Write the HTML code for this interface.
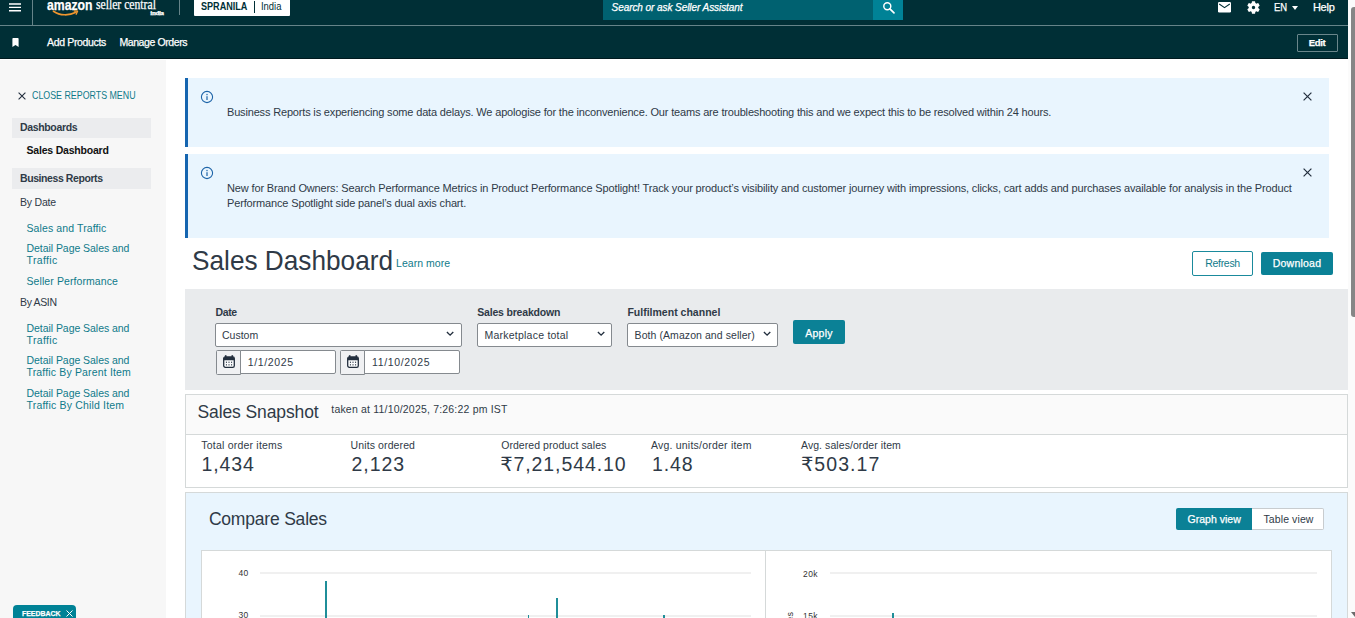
<!DOCTYPE html>
<html lang="en">
<head>
<meta charset="utf-8">
<title>Sales Dashboard</title>
<style>
*{box-sizing:border-box;margin:0;padding:0}
html,body{width:1355px;height:618px;overflow:hidden;background:#fff}
body{font-family:"Liberation Sans","DejaVu Sans",sans-serif;font-size:12px;color:#0f1111;position:relative}
.abs{position:absolute}
.t{position:absolute;white-space:nowrap;line-height:1;transform-origin:0 50%}
#wrap{position:absolute;left:0;top:0;width:1348px;height:618px;overflow:hidden;background:#fff}
/* header */
#hdr{position:absolute;left:0;top:0;width:1348px;height:59px;background:#002f36;border-bottom:1px solid #001a1f}
#hdr .line{position:absolute;left:0;top:25px;width:1348px;height:1px;background:#668489}
.w{color:#fff;-webkit-text-stroke:0.25px #fff}
/* sidebar */
#side{position:absolute;left:0;top:60px;width:165.5px;height:558px;background:#f7f7f7}
.sec{position:absolute;left:12.3px;width:138.5px;height:20px;background:#ebecee}
.lnk{color:#0f7a8a}
/* alerts */
.alert{position:absolute;left:185px;width:1144px;background:#e9f5fe;border-left:3px solid #1565b0}
/* form */
.sel{position:absolute;height:23.5px;background:#fff;border:1px solid #858a8f;border-radius:2px}
.btn{position:absolute;border-radius:2px;background:#0b8196;color:#fff;text-align:center}
</style>
</head>
<body>
<div id="wrap">

<!-- HEADER -->
<div id="hdr">
  <div class="line"></div>
  <!-- hamburger -->
  <svg class="abs" style="left:9px;top:0" width="12" height="14" viewBox="0 0 12 14"><path d="M0 4 H12 M0 7.4 H12 M0 10.8 H12" stroke="#fff" stroke-width="1.4"/></svg>
  <div class="abs" style="left:32px;top:0;width:1px;height:25px;background:#668489"></div>
  <!-- logo -->
  <div class="t w" id="lg1" style="left:46.6px;top:-3.2px;font-size:15px;font-weight:bold;transform:scaleX(0.815)">amazon</div>
  <div class="t w" id="lg2" style="left:95.6px;top:-2px;font-size:14px;font-family:'Liberation Serif',serif;transform:scaleX(0.833)">seller central</div>
  <div class="t w" id="lg3" style="left:150.3px;top:9.5px;font-size:7px;font-family:'Liberation Serif',serif;font-weight:bold;letter-spacing:-0.34px">india</div>
  <svg class="abs" style="left:52px;top:9.600px" width="28" height="8" viewBox="0 0 28 8"><path d="M1.5 1.2 C8 5.8 17 5.8 24 2.2" fill="none" stroke="#f0962e" stroke-width="1.7" stroke-linecap="round"/><path d="M22.3 1 L25.6 1.2 L24.2 4.2" fill="none" stroke="#f0962e" stroke-width="1.3" stroke-linejoin="round" stroke-linecap="round"/></svg>
  <div class="abs" style="left:179px;top:0;width:1px;height:15px;background:#668489"></div>
  <!-- merchant box -->
  <div class="abs" style="left:194px;top:-2px;width:96px;height:18px;background:#fff;border-radius:1px"></div>
  <div class="t" id="mb1" style="left:201.0px;top:1.0px;font-size:10.5px;font-weight:bold;color:#002f36;letter-spacing:0px;transform:scaleX(0.863)">SPRANILA</div>
  <div class="abs" style="left:254px;top:1px;width:1px;height:12px;background:#002f36"></div>
  <div class="t" id="mb2" style="left:261.4px;top:1.0px;font-size:10.5px;color:#002f36;letter-spacing:0px;transform:scaleX(0.898)">India</div>
  <!-- search -->
  <div class="abs" style="left:603px;top:-4px;width:270px;height:24px;background:#006170"></div>
  <div class="abs" style="left:873px;top:-4px;width:30px;height:24px;background:#008296"></div>
  <div class="t w" id="srch" style="left:611.6px;top:2.5px;font-size:10px;font-style:italic;letter-spacing:-0.07px">Search or ask Seller Assistant</div>
  <svg class="abs" style="left:881.7px;top:0.8px" width="14" height="14" viewBox="0 0 14 14"><circle cx="5.3" cy="5.2" r="3.5" fill="none" stroke="#fff" stroke-width="1.45"/><path d="M7.9 7.8 L12 11.800" stroke="#fff" stroke-width="1.7" stroke-linecap="round"/></svg>
  <!-- right icons -->
  <svg class="abs" style="left:1218px;top:2px" width="13" height="11" viewBox="0 0 13 11"><rect x="0" y="0" width="13" height="10.5" rx="1.2" fill="#fff"/><path d="M1.2 2 L6.5 5.6 L11.8 2" fill="none" stroke="#002f36" stroke-width="1.1"/></svg>
  <svg class="abs" style="left:1247px;top:1px" width="13" height="13" viewBox="0 0 24 24"><path fill="#fff" d="M19.14 12.94c.04-.3.06-.61.06-.94 0-.32-.02-.64-.07-.94l2.03-1.58a.49.49 0 0 0 .12-.61l-1.92-3.32a.488.488 0 0 0-.59-.22l-2.39.96c-.5-.38-1.03-.7-1.62-.94l-.36-2.54a.484.484 0 0 0-.48-.41h-3.84c-.24 0-.43.17-.47.41l-.36 2.54c-.59.24-1.13.57-1.62.94l-2.39-.96c-.22-.08-.47 0-.59.22L2.74 8.87c-.12.21-.08.47.12.61l2.03 1.58c-.05.3-.09.63-.09.94s.02.64.07.94l-2.03 1.58a.49.49 0 0 0-.12.61l1.92 3.32c.12.22.37.29.59.22l2.39-.96c.5.38 1.03.7 1.62.94l.36 2.54c.05.24.24.41.48.41h3.84c.24 0 .44-.17.47-.41l.36-2.54c.59-.24 1.13-.56 1.62-.94l2.39.96c.22.08.47 0 .59-.22l1.92-3.32c.12-.22.07-.47-.12-.61l-2.01-1.58zM12 14.5c-1.38 0-2.5-1.12-2.5-2.5s1.12-2.5 2.5-2.5 2.5 1.12 2.5 2.5-1.12 2.5-2.5 2.5z" transform="translate(12 12) scale(1.22) translate(-12 -12)"/></svg>
  <div class="t w" id="en" style="left:1274.3px;top:2px;font-size:11px;transform:scaleX(0.86)">EN</div>
  <div class="abs" style="left:1292px;top:6px;width:0;height:0;border-left:3px solid transparent;border-right:3px solid transparent;border-top:4px solid #fff"></div>
  <div class="t w" id="help" style="left:1312.9px;top:2.0px;font-size:11px;letter-spacing:-0.24px">Help</div>
  <!-- second row -->
  <svg class="abs" style="left:12px;top:38px" width="7" height="9" viewBox="0 0 7 9"><path d="M0.4 0.8 Q0.4 0 1.2 0 H5.8 Q6.600 0 6.600 0.8 V9 L3.5 7 L0.4 9 Z" fill="#fff"/></svg>
  <div class="t w" id="ap" style="left:47.0px;top:37.0px;font-size:10.5px;letter-spacing:-0.34px">Add Products</div>
  <div class="t w" id="mo" style="left:119.4px;top:37.0px;font-size:10.5px;letter-spacing:-0.40px">Manage Orders</div>
  <div class="abs" style="left:1297px;top:34px;width:41px;height:18px;border:1px solid #6a868b;border-radius:1px"></div>
  <div class="t w" id="edit" style="left:1308.8px;top:38.0px;font-size:9.5px;font-weight:bold;letter-spacing:-0.33px">Edit</div>
</div>

<!-- SIDEBAR -->
<div id="side"></div>
<svg class="abs" style="left:18px;top:92px" width="8" height="8" viewBox="0 0 8 8"><path d="M0.600 0.600 L7.4 7.4 M7.4 0.600 L0.600 7.4" stroke="#232f3e" stroke-width="1.1"/></svg>
<div class="t lnk" id="crm" style="left:32.1px;top:90.5px;font-size:10.3px;letter-spacing:0px;transform:scaleX(0.859)">CLOSE REPORTS MENU</div>
<div class="sec" style="top:118px"></div>
<div class="t" id="s1" style="left:20.0px;top:122.0px;font-size:10.5px;font-weight:bold;color:#2f3a47;letter-spacing:-0.35px">Dashboards</div>
<div class="t" id="s2" style="left:26.5px;top:145.0px;font-size:10.5px;font-weight:bold;color:#111;letter-spacing:-0.20px">Sales Dashboard</div>
<div class="sec" style="top:168px;height:20.7px"></div>
<div class="t" id="s3" style="left:20.0px;top:173.0px;font-size:10.5px;font-weight:bold;color:#2f3a47;letter-spacing:-0.42px">Business Reports</div>
<div class="t" id="s4" style="left:20.0px;top:197.0px;font-size:10.5px;color:#2f3a47;letter-spacing:-0.20px">By Date</div>
<div class="t lnk" id="s5" style="left:26.5px;top:223.0px;font-size:10.5px;letter-spacing:0.11px">Sales and Traffic</div>
<div class="t lnk" id="s6" style="left:26.5px;top:243.0px;font-size:10.5px;letter-spacing:-0.05px">Detail Page Sales and</div>
<div class="t lnk" id="s7" style="left:26.5px;top:254.5px;font-size:10.5px;letter-spacing:0.36px">Traffic</div>
<div class="t lnk" id="s8" style="left:26.5px;top:276.0px;font-size:10.5px;letter-spacing:0.09px">Seller Performance</div>
<div class="t" id="s9" style="left:20.0px;top:297.0px;font-size:10.5px;color:#2f3a47;letter-spacing:-0.35px">By ASIN</div>
<div class="t lnk" id="s10" style="left:26.5px;top:323.0px;font-size:10.5px;letter-spacing:-0.05px">Detail Page Sales and</div>
<div class="t lnk" id="s11" style="left:26.5px;top:335.0px;font-size:10.5px;letter-spacing:0.36px">Traffic</div>
<div class="t lnk" id="s12" style="left:26.5px;top:355.0px;font-size:10.5px;letter-spacing:-0.05px">Detail Page Sales and</div>
<div class="t lnk" id="s13" style="left:26.5px;top:367.0px;font-size:10.5px;letter-spacing:0.16px">Traffic By Parent Item</div>
<div class="t lnk" id="s14" style="left:26.5px;top:388.0px;font-size:10.5px;letter-spacing:-0.05px">Detail Page Sales and</div>
<div class="t lnk" id="s15" style="left:26.5px;top:400.0px;font-size:10.5px;letter-spacing:0.18px">Traffic By Child Item</div>
<!-- feedback -->
<div class="abs" style="left:13px;top:605px;width:63px;height:20px;background:#008296;border-radius:4px"></div>
<div class="t w" id="fb" style="left:22.4px;top:610.0px;font-size:7.7px;font-weight:bold;letter-spacing:0px;transform:scaleX(0.901)">FEEDBACK</div>
<svg class="abs" style="left:66px;top:610px" width="7" height="7" viewBox="0 0 7 7"><path d="M0.5 0.5 L6.5 6.5 M6.5 0.5 L0.5 6.5" stroke="#fff" stroke-width="1"/></svg>

<!-- ALERTS -->
<div class="alert" style="top:78px;height:69px"></div>
<div class="alert" style="top:154px;height:84px"></div>
<svg class="abs" style="left:200px;top:89.5px" width="14" height="14" viewBox="0 0 14 14"><circle cx="7" cy="7" r="5.6" fill="none" stroke="#1d64a8" stroke-width="1.1"/><rect x="6.4" y="6.2" width="1.2" height="3.8" fill="#1d64a8"/><rect x="6.4" y="3.9" width="1.2" height="1.3" fill="#1d64a8"/></svg>
<svg class="abs" style="left:200.2px;top:165.7px" width="14" height="14" viewBox="0 0 14 14"><circle cx="7" cy="7" r="5.6" fill="none" stroke="#1d64a8" stroke-width="1.1"/><rect x="6.4" y="6.2" width="1.2" height="3.8" fill="#1d64a8"/><rect x="6.4" y="3.9" width="1.2" height="1.3" fill="#1d64a8"/></svg>
<div class="t" id="a1" style="left:227.0px;top:106.5px;font-size:11px;color:#2f3a47;letter-spacing:-0.17px">Business Reports is experiencing some data delays. We apologise for the inconvenience. Our teams are troubleshooting this and we expect this to be resolved within 24 hours.</div>
<div class="t" id="a2" style="left:227.0px;top:182.5px;font-size:11px;color:#2f3a47;letter-spacing:-0.14px">New for Brand Owners: Search Performance Metrics in Product Performance Spotlight! Track your product’s visibility and customer journey with impressions, clicks, cart adds and purchases available for analysis in the Product</div>
<div class="t" id="a3" style="left:227.0px;top:197.5px;font-size:11px;color:#2f3a47;letter-spacing:-0.15px">Performance Spotlight side panel’s dual axis chart.</div>
<svg class="abs" style="left:1303px;top:92px" width="9" height="9" viewBox="0 0 9 9"><path d="M0.600 0.600 L8.4 8.4 M8.4 0.600 L0.600 8.4" stroke="#232f3e" stroke-width="1.2"/></svg>
<svg class="abs" style="left:1303px;top:168px" width="9" height="9" viewBox="0 0 9 9"><path d="M0.600 0.600 L8.4 8.4 M8.4 0.600 L0.600 8.4" stroke="#232f3e" stroke-width="1.2"/></svg>

<!-- TITLE -->
<div class="t" id="ttl" style="left:191.8px;top:247.0px;font-size:28px;color:#2f3a47;letter-spacing:0px;transform:scaleX(0.936)">Sales Dashboard</div>
<div class="t lnk" id="lm" style="left:396.0px;top:257.5px;font-size:10.5px;letter-spacing:0.04px">Learn more</div>
<div class="abs" style="left:1192px;top:251px;width:61px;height:25px;border:1px solid #1a8a9c;border-radius:2px;background:#fff"></div>
<div class="t lnk" id="rf" style="left:1205.2px;top:258.0px;font-size:10.5px;letter-spacing:-0.29px">Refresh</div>
<div class="btn" style="left:1261px;top:252px;width:72px;height:23px"></div>
<div class="t w" id="dl" style="left:1272.7px;top:258.0px;font-size:10.5px;letter-spacing:0.23px">Download</div>

<!-- FILTER BAR -->
<div class="abs" style="left:185px;top:289px;width:1163px;height:101px;background:#e9ebed"></div>
<div class="t" id="f1" style="left:215.4px;top:306.5px;font-size:10.5px;font-weight:bold;color:#2f3a47;letter-spacing:-0.34px">Date</div>
<div class="sel" style="left:215px;top:323px;width:247px"></div>
<div class="t" id="f2" style="left:222.0px;top:330.0px;font-size:10.5px;color:#2f3a47;letter-spacing:-0.01px">Custom</div>
<svg class="abs" style="left:446px;top:331px" width="8.2" height="5.5" viewBox="0 0 9 6"><path d="M1 1 L4.5 4.5 L8 1" fill="none" stroke="#232f3e" stroke-width="1.5"/></svg>
<div class="abs" style="left:216px;top:350px;width:25px;height:24.5px;background:#f0f1f3;border:1px solid #858a8f;border-radius:1.5px 0 0 1.5px"></div>
<div class="abs" style="left:240px;top:350px;width:96px;height:23.5px;background:#fff;border:1px solid #858a8f;border-radius:0 2px 2px 0"></div>
<div class="t" id="d1" style="left:247.8px;top:357.0px;font-size:10.5px;color:#2f3a47;letter-spacing:0.64px">1/1/2025</div>
<div class="abs" style="left:340px;top:350px;width:25px;height:24.5px;background:#f0f1f3;border:1px solid #858a8f;border-radius:1.5px 0 0 1.5px"></div>
<div class="abs" style="left:364px;top:350px;width:96px;height:23.5px;background:#fff;border:1px solid #858a8f;border-radius:0 2px 2px 0"></div>
<div class="t" id="d2" style="left:372.0px;top:357.0px;font-size:10.5px;color:#2f3a47;letter-spacing:0.65px">11/10/2025</div>
<svg class="abs" style="left:223px;top:355px" width="12" height="13" viewBox="0 0 12 13"><rect x="0.7" y="1.9" width="10.600" height="10.4" rx="1.600" fill="#fbfcfd" stroke="#232f3e" stroke-width="1.3"/><path d="M0.7 5.2 V3.5 Q0.7 1.9 2.3 1.9 H9.7 Q11.3 1.9 11.3 3.5 V5.2 Z" fill="#232f3e"/><rect x="1.9" y="0.2" width="1.600" height="2.2" fill="#232f3e"/><rect x="8.5" y="0.2" width="1.600" height="2.2" fill="#232f3e"/><g fill="#232f3e"><rect x="2.9" y="6.7" width="1.1" height="1.1"/><rect x="5.45" y="6.7" width="1.1" height="1.1"/><rect x="8" y="6.7" width="1.1" height="1.1"/><rect x="2.9" y="9.300" width="1.1" height="1.1"/><rect x="5.45" y="9.300" width="1.1" height="1.1"/><rect x="8" y="9.300" width="1.1" height="1.1"/></g></svg>
<svg class="abs" style="left:347px;top:355px" width="12" height="13" viewBox="0 0 12 13"><rect x="0.7" y="1.9" width="10.600" height="10.4" rx="1.600" fill="#fbfcfd" stroke="#232f3e" stroke-width="1.3"/><path d="M0.7 5.2 V3.5 Q0.7 1.9 2.3 1.9 H9.7 Q11.3 1.9 11.3 3.5 V5.2 Z" fill="#232f3e"/><rect x="1.9" y="0.2" width="1.600" height="2.2" fill="#232f3e"/><rect x="8.5" y="0.2" width="1.600" height="2.2" fill="#232f3e"/><g fill="#232f3e"><rect x="2.9" y="6.7" width="1.1" height="1.1"/><rect x="5.45" y="6.7" width="1.1" height="1.1"/><rect x="8" y="6.7" width="1.1" height="1.1"/><rect x="2.9" y="9.300" width="1.1" height="1.1"/><rect x="5.45" y="9.300" width="1.1" height="1.1"/><rect x="8" y="9.300" width="1.1" height="1.1"/></g></svg>
<div class="t" id="f3" style="left:477.2px;top:306.5px;font-size:10.5px;font-weight:bold;color:#2f3a47;letter-spacing:-0.18px">Sales breakdown</div>
<div class="sel" style="left:477px;top:323px;width:135px"></div>
<div class="t" id="f4" style="left:484.4px;top:330.0px;font-size:10.5px;color:#2f3a47;letter-spacing:0.24px">Marketplace total</div>
<svg class="abs" style="left:597px;top:331px" width="8.2" height="5.5" viewBox="0 0 9 6"><path d="M1 1 L4.5 4.5 L8 1" fill="none" stroke="#232f3e" stroke-width="1.5"/></svg>
<div class="t" id="f5" style="left:627.4px;top:306.5px;font-size:10.5px;font-weight:bold;color:#2f3a47;letter-spacing:0.01px">Fulfilment channel</div>
<div class="sel" style="left:627px;top:323px;width:151px"></div>
<div class="t" id="f6" style="left:634.6px;top:330.0px;font-size:10.5px;color:#2f3a47;letter-spacing:0.07px">Both (Amazon and seller)</div>
<svg class="abs" style="left:763px;top:331px" width="8.2" height="5.5" viewBox="0 0 9 6"><path d="M1 1 L4.5 4.5 L8 1" fill="none" stroke="#232f3e" stroke-width="1.5"/></svg>
<div class="btn" style="left:793px;top:320px;width:52px;height:24px"></div>
<div class="t w" id="apl" style="left:805.3px;top:327.5px;font-size:10.5px;letter-spacing:0.22px">Apply</div>

<!-- SNAPSHOT -->
<div class="abs" style="left:185px;top:394px;width:1163px;height:94px;border:1px solid #d5d9d9;background:#fff"></div>
<div class="abs" style="left:186px;top:395px;width:1161px;height:39.5px;background:#fafafa;border-bottom:1px solid #d5d9d9"></div>
<div class="t" id="sn" style="left:197.5px;top:403.5px;font-size:17.5px;color:#2f3a47;letter-spacing:-0.11px">Sales Snapshot</div>
<div class="t" id="tk" style="left:331.3px;top:404.0px;font-size:10.5px;color:#2f3a47;letter-spacing:0.19px">taken at 11/10/2025, 7:26:22 pm IST</div>
<div class="t" id="m1l" style="left:201.3px;top:440.0px;font-size:10.5px;color:#2f3a47;letter-spacing:0.21px">Total order items</div>
<div class="t" id="m1v" style="left:201.6px;top:455.0px;font-size:19.5px;color:#2f3a47;letter-spacing:0.86px">1,434</div>
<div class="t" id="m2l" style="left:350.6px;top:440.0px;font-size:10.5px;color:#2f3a47;letter-spacing:0.11px">Units ordered</div>
<div class="t" id="m2v" style="left:351.4px;top:455.0px;font-size:19.5px;color:#2f3a47;letter-spacing:0.99px">2,123</div>
<div class="t" id="m3l" style="left:501.2px;top:440.0px;font-size:10.5px;color:#2f3a47;letter-spacing:0.06px">Ordered product sales</div>
<div class="t" id="m3v" style="left:500.2px;top:455.0px;font-size:19.5px;color:#2f3a47;letter-spacing:0.91px">₹7,21,544.10</div>
<div class="t" id="m4l" style="left:650.9px;top:440.0px;font-size:10.5px;color:#2f3a47;letter-spacing:0.22px">Avg. units/order item</div>
<div class="t" id="m4v" style="left:652.1px;top:455.0px;font-size:19.5px;color:#2f3a47;letter-spacing:0.86px">1.48</div>
<div class="t" id="m5l" style="left:801.0px;top:440.0px;font-size:10.5px;color:#2f3a47;letter-spacing:0.07px">Avg. sales/order item</div>
<div class="t" id="m5v" style="left:800.9px;top:455.0px;font-size:19.5px;color:#2f3a47;letter-spacing:1.05px">₹503.17</div>

<!-- COMPARE SALES -->
<div class="abs" style="left:185px;top:492px;width:1163px;height:140px;border:1px solid #d5d9d9;background:#e9f5fe"></div>
<div class="t" id="cs" style="left:208.9px;top:510.5px;font-size:17.5px;color:#2f3a47;letter-spacing:-0.20px">Compare Sales</div>
<div class="btn" style="left:1176px;top:508px;width:76px;height:22px;border-radius:2px 0 0 2px"></div>
<div class="t w" id="gv" style="left:1187.5px;top:514.0px;font-size:10.5px;letter-spacing:0.02px">Graph view</div>
<div class="abs" style="left:1252px;top:508px;width:72px;height:22px;background:#fff;border:1px solid #c8cccf;border-left:none;border-radius:0 2px 2px 0"></div>
<div class="t" id="tv" style="left:1263.5px;top:514.0px;font-size:10.5px;color:#2f3a47;letter-spacing:0.10px">Table view</div>
<div class="abs" style="left:201px;top:550px;width:1131px;height:80px;background:#fff;border:1px solid #d5d9d9"></div>
<div class="abs" style="left:765px;top:550px;width:1px;height:80px;background:#d5d9d9"></div>
<!-- chart 1 -->
<div class="abs" style="left:260px;top:572px;width:491px;height:1.600px;background:#f0f0f0"></div>
<div class="abs" style="left:260px;top:615px;width:491px;height:1.600px;background:#f0f0f0"></div>
<div class="t" id="c40" style="left:238.600px;top:569px;font-size:8.5px;color:#333;letter-spacing:0.3px">40</div>
<div class="t" id="c30" style="left:238.600px;top:611px;font-size:8.5px;color:#333;letter-spacing:0.3px">30</div>
<div class="abs" style="left:325px;top:581px;width:2px;height:40px;background:#1f8e99"></div>
<div class="abs" style="left:527.5px;top:614.5px;width:1.5px;height:5px;background:#1f8e99"></div>
<div class="abs" style="left:556px;top:598px;width:2px;height:22px;background:#1f8e99"></div>
<div class="abs" style="left:663.3px;top:614.5px;width:1.5px;height:5px;background:#1f8e99"></div>
<!-- chart 2 -->
<div class="abs" style="left:830px;top:572px;width:487px;height:1.600px;background:#f0f0f0"></div>
<div class="abs" style="left:830px;top:615px;width:487px;height:1.600px;background:#f0f0f0"></div>
<div class="t" id="c20k" style="left:803px;top:570px;font-size:8.5px;color:#333;letter-spacing:0.45px">20k</div>
<div class="t" id="c15k" style="left:803px;top:612px;font-size:8.5px;color:#333;letter-spacing:0.45px">15k</div>
<div class="abs" style="left:892.3px;top:613px;width:2px;height:8px;background:#1f8e99"></div>
<div class="t" id="rot" style="left:786px;top:707px;font-size:9px;color:#333;transform:rotate(-90deg);transform-origin:0 0;letter-spacing:0.3px">Ordered product sales</div>

</div>
<!-- scrollbar -->
<div class="abs" style="left:1348px;top:0;width:7px;height:618px;background:#fbfbfb"></div>
<div class="abs" style="left:1351px;top:7px;width:8px;height:310px;background:#868686;border-radius:3px"></div>
<div class="abs" style="left:1350.5px;top:612px;width:0;height:0;border-left:4px solid transparent;border-right:4px solid transparent;border-top:5px solid #6b6b6b"></div>
</body>
</html>
